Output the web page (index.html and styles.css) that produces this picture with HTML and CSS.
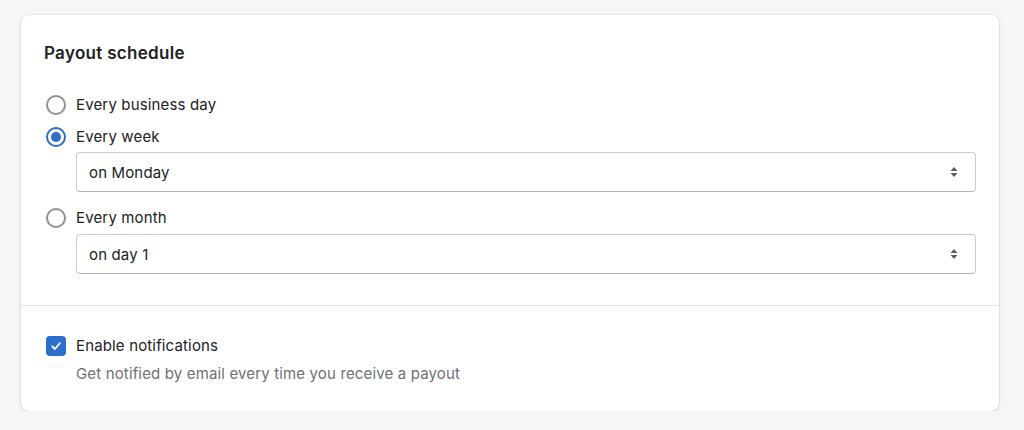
FILE: index.html
```html
<!DOCTYPE html>
<html>
<head>
<meta charset="utf-8">
<link rel="stylesheet" href="styles.css">
</head>
<body>
<div class="card">
  <section class="section first">
    <h2 class="title">Payout schedule</h2>
    <div class="choices">
      <div class="choice">
        <span class="radio"></span><span class="label">Every business day</span>
      </div>
      <div class="choice">
        <span class="radio checked"></span><span class="label">Every week</span>
      </div>
      <div class="select">
        <span>on Monday</span>
        <svg class="arrows" width="10" height="14" viewBox="0 0 10 14"><path d="M5 2 L8.5 6 H1.5 Z M5 12 L8.5 8 H1.5 Z" fill="#5c5f62"/></svg>
      </div>
      <div class="choice gap">
        <span class="radio"></span><span class="label">Every month</span>
      </div>
      <div class="select">
        <span>on day 1</span>
        <svg class="arrows" width="10" height="14" viewBox="0 0 10 14"><path d="M5 2 L8.5 6 H1.5 Z M5 12 L8.5 8 H1.5 Z" fill="#5c5f62"/></svg>
      </div>
    </div>
  </section>
  <section class="section second">
    <div class="choice">
      <span class="checkbox"><svg width="14" height="14" viewBox="0 0 14 14"><path d="M3.2 7.3 L5.9 10 L10.9 4.2" fill="none" stroke="#fff" stroke-width="1.8" stroke-linecap="round" stroke-linejoin="round"/></svg></span><span class="label">Enable notifications</span>
    </div>
    <div class="help">Get notified by email every time you receive a payout</div>
  </section>
</div>
</body>
</html>
```
FILE: styles.css
```css
html, body {
  margin: 0;
  padding: 0;
  background: #f6f6f7;
}
body {
  padding: 15px 25px 0 21px;
  font-family: Inter, "Noto Sans", sans-serif;
  color: #202223;
  font-size: 15px;
  letter-spacing: 0.15px;
}
.card {
  background: #fff;
  border-radius: 8px;
  box-shadow: 0 0 0 1px rgba(63,63,68,0.06), 0 1px 3px rgba(63,63,68,0.18);
}
.section {
  padding: 0 23px 0 23px;
}
.first {
  padding-top: 26px;
  padding-bottom: 31px;
  border-bottom: 1px solid #e1e3e5;
}
.second {
  padding-top: 28px;
  padding-bottom: 25px;
}
.title {
  margin: 0 0 28px 0;
  font-size: 17px;
  line-height: 24px;
  font-weight: 600;
  letter-spacing: 0.3px;
}
.choices {
  display: flex;
  flex-direction: column;
}
.choice {
  display: flex;
  align-items: center;
  height: 24px;
  margin-bottom: 8px;
}
.choices .choice + .select { margin-top: -5px; }
.choices .choice.gap + .select { margin-top: -4px; }
.choice.gap { margin-top: 14px; }
.radio {
  box-sizing: border-box;
  width: 20px;
  height: 20px;
  border-radius: 50%;
  border: 2px solid #8c9196;
  margin-left: 2px;
  margin-right: 10px;
  position: relative;
}
.radio.checked {
  border-color: #2c6ecb;
}
.radio.checked::after {
  content: "";
  position: absolute;
  left: 3px;
  top: 3px;
  width: 10px;
  height: 10px;
  border-radius: 50%;
  background: #2c6ecb;
}
.label {
  line-height: 24px;
}
.select {
  box-sizing: border-box;
  margin-left: 32px;
  height: 40px;
  border: 1px solid #c9cccf;
  border-bottom-color: #aeb4b9;
  border-radius: 4px;
  display: flex;
  align-items: center;
  justify-content: space-between;
  padding: 0 16px 0 12px;
}
.checkbox {
  box-sizing: border-box;
  width: 20px;
  height: 20px;
  border-radius: 4px;
  background: #2c6ecb;
  margin-left: 2px;
  margin-right: 10px;
  display: flex;
  align-items: center;
  justify-content: center;
}
.second .choice { margin-bottom: 4px; }
.help {
  margin-left: 32px;
  color: #6d7175;
  line-height: 24px;
}
```
